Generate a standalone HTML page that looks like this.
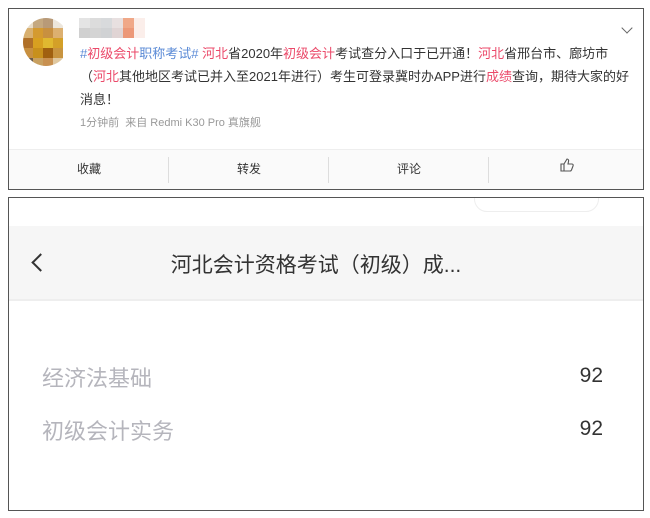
<!DOCTYPE html>
<html><head><meta charset="utf-8"><style>
*{margin:0;padding:0;box-sizing:border-box}
body{width:650px;height:518px;background:#fff;position:relative;overflow:hidden;font-family:"Liberation Sans","Noto Sans CJK SC",sans-serif}
.box{position:absolute;border:1px solid #555;background:#fff}
#top{left:8px;top:8px;width:636px;height:182px}
#bot{left:8px;top:197px;width:636px;height:314px;overflow:hidden}
.av{position:absolute;left:14px;top:9px;width:46px;height:48px;border-radius:50%;overflow:hidden;display:grid;grid-template-columns:repeat(5,10px);grid-template-rows:repeat(5,10px)}
.name{position:absolute;left:70px;top:9px;display:grid;grid-template-columns:repeat(6,11px);grid-template-rows:repeat(2,10px)}
.txt{position:absolute;left:71px;top:33px;width:580px;font-size:13px;line-height:23px;color:#333;white-space:nowrap}
.r{color:#eb4a6a}.b{color:#5a8ad6}
.meta{position:absolute;left:71px;top:105px;font-size:11px;color:#999}
.bar{position:absolute;left:0;top:140px;width:634px;height:40px;background:#fafafa;border-top:1px solid #eee}
.bar div{position:absolute;top:10px;font-size:12px;color:#333}
.sep{position:absolute;top:7px;width:1px;height:26px;background:#ddd}
.chev{position:absolute;right:12px;top:15px;width:8px;height:8px;border-right:1.5px solid #666;border-bottom:1.5px solid #666;transform:rotate(45deg)}
.hdr{position:absolute;left:0;top:28px;width:634px;height:75px;background:#f6f6f6;border-bottom:2px solid #eee}
.back{position:absolute;left:25px;top:30px;width:13px;height:13px;border-left:2px solid #333;border-bottom:2px solid #333;transform:rotate(45deg)}
.title{position:absolute;left:-10px;width:634px;text-align:center;top:23px;font-size:21px;color:#333}
.row{position:absolute;left:33px;font-size:22px;color:#b5b5bc}
.num{position:absolute;right:40px;font-size:21px;color:#333}
</style></head><body>
<div class="box" id="top">
 <div class="av">
  <i style="background:#e8dcc8"></i><i style="background:#c4a880"></i><i style="background:#b89a78"></i><i style="background:#ece6dc"></i><i style="background:#fff"></i>
  <i style="background:#d8b070"></i><i style="background:#d49a30"></i><i style="background:#c89040"></i><i style="background:#dcb070"></i><i style="background:#fff"></i>
  <i style="background:#b07028"></i><i style="background:#d8a020"></i><i style="background:#e0b830"></i><i style="background:#d4a028"></i><i style="background:#fff"></i>
  <i style="background:#c89040"></i><i style="background:#c8901c"></i><i style="background:#a06010"></i><i style="background:#c89440"></i><i style="background:#fff"></i>
  <i style="background:#6a5a4a"></i><i style="background:#c8a060"></i><i style="background:#c89050"></i><i style="background:#e0c8a0"></i><i style="background:#fff"></i>
 </div>
 <div class="name">
  <i style="background:#e4e4e4"></i><i style="background:#dcdcdc"></i><i style="background:#d8dadc"></i><i style="background:#e8e0e0"></i><i style="background:#f0a888"></i><i style="background:#fbeeea"></i>
  <i style="background:#d0d0d0"></i><i style="background:#d4d4d4"></i><i style="background:#d0d2d4"></i><i style="background:#e0d4d4"></i><i style="background:#ec9878"></i><i style="background:#fbeeea"></i>
 </div>
 <div class="chev"></div>
 <div class="txt"><span class="b">#</span><span class="r">初级会计</span><span class="b">职称考试#</span> <span class="r">河北</span>省2020年<span class="r">初级会计</span>考试查分入口于已开通！<span class="r">河北</span>省邢台市、廊坊市<br>（<span class="r">河北</span>其他地区考试已并入至2021年进行）考生可登录冀时办APP进行<span class="r">成绩</span>查询，期待大家的好<br>消息！</div>
 <div class="meta">1分钟前&nbsp; 来自 Redmi K30 Pro 真旗舰</div>
 <div class="bar">
  <div style="left:68px">收藏</div><span class="sep" style="left:159px"></span>
  <div style="left:228px">转发</div><span class="sep" style="left:319px"></span>
  <div style="left:388px">评论</div><span class="sep" style="left:479px"></span>
  <div style="left:551px;top:8px"><svg width="14" height="14" viewBox="0 0 14 14"><path d="M1 6h3v7H1zM4 6l3-5c1 0 2 1 1.5 2.5L8 6h4c1 0 1.5 1 1 2l-1.5 4c-.3.7-.8 1-1.5 1H4" fill="none" stroke="#555" stroke-width="1.1"/></svg></div>
 </div>
</div>
<div class="box" id="bot">
 <div style="position:absolute;left:465px;top:-12px;width:125px;height:26px;border:1px solid #eee;border-radius:14px"></div>
 <div class="hdr"><div class="back"></div><div class="title">河北会计资格考试（初级）成...</div></div>
 <div class="row" style="top:163px">经济法基础</div><div class="num" style="top:166px">92</div>
 <div class="row" style="top:216px">初级会计实务</div><div class="num" style="top:219px">92</div>
</div>
</body></html>
